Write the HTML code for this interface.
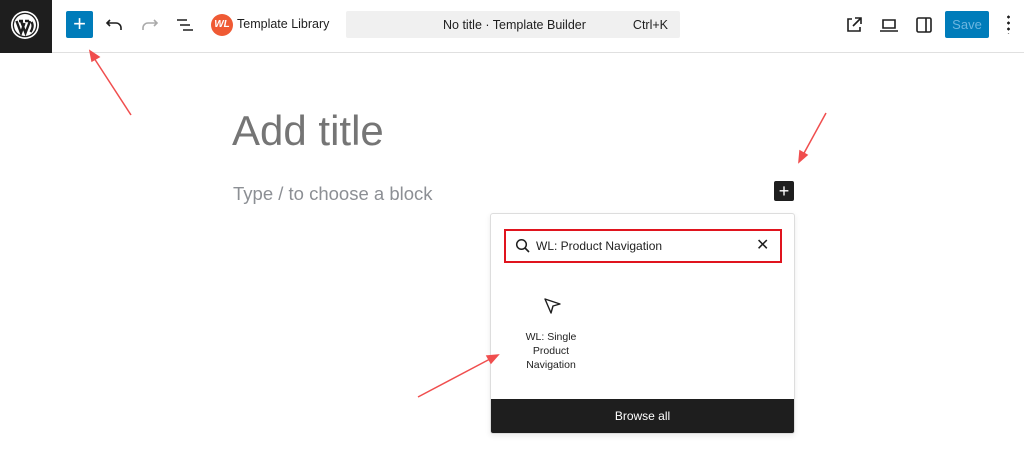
<!DOCTYPE html>
<html><head><style>
body{margin:0;width:1024px;height:464px;background:#fff;font-family:"Liberation Sans",sans-serif;position:relative;overflow:hidden}
.a{position:absolute}
</style></head><body>
<div class="a" style="left:0;top:0;width:1024px;height:52px;border-bottom:1px solid #e0e0e0"></div>
<div class="a" style="left:0;top:0;width:52px;height:53px;background:#1e1e1e"></div>
<svg class="a" style="left:9px;top:9px" width="32" height="32" viewBox="0 0 32 32"><circle cx="16" cy="16" r="14" fill="#fff"/><circle cx="16" cy="16" r="12.3" fill="#1e1e1e"/><circle cx="16" cy="16" r="11" fill="#fff"/><path d="M7.5 12 L12 24 L15.5 14 M12 12 L16.5 24 L21 12 M10 12h4M16 12h4 M22.5 13c2 3 1 7-1 10" stroke="#1e1e1e" stroke-width="2.4" fill="none"/></svg>
<div class="a" style="left:66px;top:11px;width:27px;height:27px;background:#007cba;border-radius:2px;color:#fff;font-size:22px;line-height:26px;text-align:center">+</div>
<svg class="a" style="left:104px;top:14px" width="22" height="22" viewBox="0 0 22 22"><path d="M6 6 L3 9 L6 12 M3 9 H12 a5 5 0 0 1 5 5 v2" stroke="#1e1e1e" stroke-width="1.6" fill="none"/></svg>
<svg class="a" style="left:138px;top:14px" width="22" height="22" viewBox="0 0 22 22"><path d="M16 6 L19 9 L16 12 M19 9 H10 a5 5 0 0 0 -5 5 v2" stroke="#aaa" stroke-width="1.6" fill="none"/></svg>
<svg class="a" style="left:174px;top:14px" width="22" height="22" viewBox="0 0 22 22"><path d="M3 6h10M6 11h10M9 16h10" stroke="#1e1e1e" stroke-width="1.6"/></svg>
<div class="a" style="left:211px;top:14px;width:22px;height:22px;border-radius:50%;background:#ef5a34;color:#fff;font-size:10px;font-weight:bold;line-height:22px;text-align:center;font-style:italic">WL</div>
<div class="a" style="left:237px;top:17px;font-size:12.5px;color:#1e1e1e">Template Library</div>
<div class="a" style="left:346px;top:11px;width:334px;height:27px;background:#f0f0f0;border-radius:2px;font-size:12.5px;color:#1e1e1e"><span class="a" style="left:97px;top:7px">No title · Template Builder</span><span class="a" style="right:12px;top:7px">Ctrl+K</span></div>
<svg class="a" style="left:843px;top:14px" width="22" height="22" viewBox="0 0 22 22"><path d="M9 5H5v12h12v-4M12 4h6v6M18 4l-8 8" stroke="#1e1e1e" stroke-width="1.6" fill="none"/></svg>
<svg class="a" style="left:878px;top:14px" width="22" height="22" viewBox="0 0 22 22"><path d="M5 6h12v8H5z M2 17h18" stroke="#1e1e1e" stroke-width="1.6" fill="none"/></svg>
<svg class="a" style="left:913px;top:14px" width="22" height="22" viewBox="0 0 22 22"><rect x="4" y="4" width="14" height="14" rx="1.5" stroke="#1e1e1e" stroke-width="1.6" fill="none"/><path d="M13 4v14" stroke="#1e1e1e" stroke-width="1.6"/></svg>
<div class="a" style="left:945px;top:11px;width:44px;height:27px;background:#007cba;border-radius:2px;color:#6cb6e0;font-size:13px;line-height:27px;text-align:center">Save</div>
<div class="a" style="left:1007px;top:14px;width:3px;height:20px;background:radial-gradient(circle,#1e1e1e 1.3px,transparent 1.5px) 0 0/3px 6px"></div>
<div class="a" style="left:232px;top:107px;font-size:42px;color:#757575">Add title</div>
<div class="a" style="left:233px;top:183px;font-size:18.5px;color:#8c8f94">Type / to choose a block</div>
<div class="a" style="left:774px;top:181px;width:20px;height:20px;background:#1e1e1e;border-radius:2px;color:#fff;font-size:18px;line-height:20px;text-align:center">+</div>
<div class="a" style="left:490px;top:213px;width:303px;height:219px;border:1px solid #ddd;border-radius:3px;box-shadow:0 2px 6px rgba(0,0,0,.08);overflow:hidden">
<div class="a" style="left:13px;top:15px;width:274px;height:30px;border:2px solid #e0141e"></div>
<svg class="a" style="left:24px;top:24px" width="16" height="16" viewBox="0 0 16 16"><circle cx="6.5" cy="6.5" r="4.8" stroke="#1e1e1e" stroke-width="1.5" fill="none"/><path d="M10 10l4 4" stroke="#1e1e1e" stroke-width="1.6"/></svg>
<div class="a" style="left:45px;top:25px;font-size:12px;color:#1e1e1e">WL: Product Navigation</div>
<div class="a" style="left:265px;top:21px;font-size:16px;color:#1e1e1e">✕</div>
<svg class="a" style="left:52px;top:82px" width="20" height="20" viewBox="0 0 20 20"><path d="M2 3 L17 8 L10 10 L8 17 Z" stroke="#1e1e1e" stroke-width="1.4" fill="none" stroke-linejoin="round"/></svg>
<div class="a" style="left:20px;top:116px;width:80px;text-align:center;font-size:10.5px;line-height:14px;color:#1e1e1e">WL: Single Product Navigation</div>
<div class="a" style="left:0;bottom:0;width:100%;height:34px;background:#1e1e1e;color:#fff;font-size:12px;line-height:34px;text-align:center">Browse all</div>
</div>
<svg class="a" style="left:0;top:0" width="1024" height="464"><g stroke="#f04e4e" stroke-width="1.5" fill="#f04e4e">
<line x1="131" y1="115" x2="94" y2="58"/><path d="M90 51 L99 57 L92 61 Z"/>
<line x1="826" y1="113" x2="803" y2="155"/><path d="M799 162 L800 151 L807 155 Z"/>
<line x1="418" y1="397" x2="490" y2="359"/><path d="M498 355 L491 363 L487 356 Z"/>
</g></svg>
</body></html>
